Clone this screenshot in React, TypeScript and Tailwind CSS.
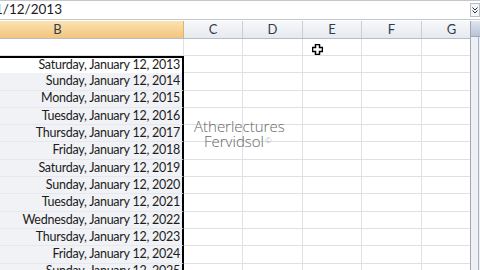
import React from 'react';

const dates = [
  'Saturday, January 12, 2013',
  'Sunday, January 12, 2014',
  'Monday, January 12, 2015',
  'Tuesday, January 12, 2016',
  'Thursday, January 12, 2017',
  'Friday, January 12, 2018',
  'Saturday, January 12, 2019',
  'Sunday, January 12, 2020',
  'Tuesday, January 12, 2021',
  'Wednesday, January 12, 2022',
  'Thursday, January 12, 2023',
  'Friday, January 12, 2024',
  'Sunday, January 12, 2025',
];

const cols = [
  { label: 'C', w: 'w-[59px]' },
  { label: 'D', w: 'w-[60px]' },
  { label: 'E', w: 'w-[59px]' },
  { label: 'F', w: 'w-[60px]' },
  { label: 'G', w: 'w-[60px]' },
];

function OtherCells() {
  return (
    <>
      {cols.map((c) => (
        <div key={c.label} className={`${c.w} shrink-0 border-r border-b border-[#dde0e4]`} />
      ))}
    </>
  );
}

export default function App() {
  return (
    <div className="relative w-[480px] h-[270px] overflow-hidden bg-white font-['Lato',sans-serif] text-[#1c1c1c]">
      {/* Formula bar */}
      <div className="h-[20px] flex border-t border-b border-[#c3c8d0] bg-white">
        <div className="flex-1 flex items-center overflow-hidden">
          <span className="-ml-[5px] text-[13.5px] leading-none">1/12/2013</span>
        </div>
        <div className="w-[10px] my-[2px] border border-[#b7bfcb] bg-[#f2f4f7] flex items-center justify-center">
          <svg width="6" height="7" viewBox="0 0 6 7">
            <path d="M0.5 0.5 L3 3 L5.5 0.5 M0.5 3.5 L3 6 L5.5 3.5" stroke="#333" strokeWidth="1" fill="none" />
          </svg>
        </div>
      </div>

      <div className="flex h-[250px] mt-[1px]">
        {/* Sheet */}
        <div className="flex-1 overflow-hidden">
          {/* Column headers */}
          <div className="flex h-[18px] border-b border-[#b6bdc9] text-[13px] text-[#2f3d52]">
            <div className="w-[252px] -ml-[68px] shrink-0 flex items-center justify-center bg-gradient-to-b from-[#fbe2b3] to-[#f3c57c] border-r border-[#e0b56a]">
              B
            </div>
            {cols.map((c) => (
              <div
                key={c.label}
                className={`${c.w} shrink-0 flex items-center justify-center bg-gradient-to-b from-[#f7f8fa] to-[#e6e9ee] border-r border-[#c9ced6]`}
              >
                {c.label}
              </div>
            ))}
          </div>

          {/* Row 1 */}
          <div className="flex h-[17px]">
            <div className="w-[252px] -ml-[68px] shrink-0 border-r border-b border-[#dde0e4] bg-white" />
            <OtherCells />
          </div>

          {/* Date rows */}
          {dates.map((d, i) => (
            <div key={d} className="flex h-[17.3px]">
              <div
                className={`w-[252px] -ml-[68px] shrink-0 flex items-center justify-end pr-[2px] border-r-2 border-r-black text-[12.5px] tracking-[-0.25px] leading-none ${
                  i === 0 ? 'border-t-2 border-t-black bg-white' : 'border-b border-b-[#e6e8ee] bg-[#f1f2f6]'
                }`}
              >
                {d}
              </div>
              <OtherCells />
            </div>
          ))}
        </div>

        {/* Vertical scrollbar */}
        <div className="w-[10px] shrink-0 border-l border-[#9ea8b8] bg-[#eef0f4] flex flex-col">
          <div className="h-[16px] bg-gradient-to-b from-[#dfe5ee] to-[#b9c4d4] border-b border-[#9ea8b8]" />
          <div className="flex-1 border-r border-[#a9b2c2] mr-[1px]" />
        </div>
      </div>

      {/* Watermark overlay */}
      <div className="absolute left-[194px] top-[119px] text-[15px] leading-[15px] text-[#666] font-['Open_Sans',sans-serif] font-light">
        <div>Atherlectures</div>
        <div className="pl-[10px]">
          Fervidsol<sup className="text-[8px] text-[#a0a0a0] ml-[1px]">©</sup>
        </div>
      </div>

      {/* Cell cursor */}
      <svg className="absolute left-[312px] top-[44px]" width="11" height="11" viewBox="0 0 11 11">
        <path
          d="M3.5 0.5 H7.5 V3.5 H10.5 V7.5 H7.5 V10.5 H3.5 V7.5 H0.5 V3.5 H3.5 Z"
          fill="#fff"
          stroke="#000"
          strokeWidth="1.5"
        />
      </svg>
    </div>
  );
}
